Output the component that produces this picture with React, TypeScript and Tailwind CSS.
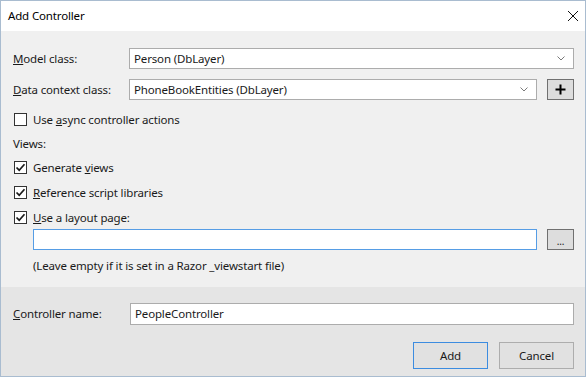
import React from "react";

function Check({ checked }: { checked?: boolean }) {
  return (
    <span className="flex h-[13px] w-[13px] shrink-0 items-center justify-center border border-[#333333] bg-white">
      {checked && (
        <svg width="11" height="11" viewBox="0 0 11 11">
          <path d="M1.5 5.5 L4.2 8.2 L9.5 2.2" fill="none" stroke="#1a1a1a" strokeWidth="1.7" />
        </svg>
      )}
    </span>
  );
}

function Chevron() {
  return (
    <svg width="8" height="5" viewBox="0 0 8 5" className="shrink-0">
      <path d="M0.5 0.5 L4 4 L7.5 0.5" fill="none" stroke="#7a7a7a" strokeWidth="1" />
    </svg>
  );
}

function Combo({ value, className }: { value: string; className?: string }) {
  return (
    <div
      className={
        "flex h-[21px] items-center justify-between border border-[#acacac] bg-white pl-[4px] pr-[8px] " +
        (className ?? "")
      }
    >
      <span>{value}</span>
      <Chevron />
    </div>
  );
}

function CheckRow({ checked, children }: { checked?: boolean; children: React.ReactNode }) {
  return (
    <div className="flex h-[13px] items-center gap-[6px] pl-[1px]">
      <Check checked={checked} />
      <span>{children}</span>
    </div>
  );
}

export default function App() {
  return (
    <div
      className="flex h-[377px] w-[586px] flex-col border border-[#a9bcd0] text-[11.5px] tracking-[-0.15px] text-[#1a1a1a]"
      style={{ fontFamily: '"Noto Sans", "Open Sans", sans-serif' }}
    >
      <div className="flex h-[30px] shrink-0 items-center justify-between bg-white pl-[7px] pr-[5px]">
        <span className="text-black">Add Controller</span>
        <svg width="12" height="12" viewBox="0 0 12 12" className="mr-[1px]">
          <path d="M1 1 L11 11 M11 1 L1 11" stroke="#111" strokeWidth="1" />
        </svg>
      </div>

      <div className="flex flex-1 flex-col bg-[#f0f0f0] pl-[12px] pr-[11px] pt-[17px]">
        <div className="flex items-center">
          <span className="w-[116px]">
            <u>M</u>odel class:
          </span>
          <Combo value="Person (DbLayer)" className="flex-1" />
        </div>

        <div className="mt-[10px] flex items-center">
          <span className="w-[116px]">
            <u>D</u>ata context class:
          </span>
          <Combo value="PhoneBookEntities (DbLayer)" className="flex-1" />
          <button className="ml-[10px] flex h-[21px] w-[27px] items-center justify-center border border-[#707070] bg-[#dddddd]">
            <svg width="11" height="11" viewBox="0 0 11 11">
              <path d="M5.5 0.5 V10.5 M0.5 5.5 H10.5" stroke="#000" strokeWidth="2" />
            </svg>
          </button>
        </div>

        <div className="mt-[13px]">
          <CheckRow>
            Use <u>a</u>sync controller actions
          </CheckRow>
        </div>

        <div className="mt-[11px] h-[14px] leading-[14px]">Views:</div>

        <div className="mt-[10px] flex flex-col gap-[12px]">
          <CheckRow checked>
            Generate <u>v</u>iews
          </CheckRow>
          <CheckRow checked>
            <u>R</u>eference script libraries
          </CheckRow>
          <CheckRow checked>
            <u>U</u>se a layout page:
          </CheckRow>
        </div>

        <div className="mt-[5px] flex items-center pl-[20px]">
          <div className="h-[21px] flex-1 border border-[#569de5] bg-white" />
          <button className="ml-[10px] flex h-[21px] w-[27px] items-end justify-center border border-[#707070] bg-[#dddddd] pb-[3px] text-[10px] leading-none">
            ...
          </button>
        </div>

        <div className="mt-[7px] pl-[20px]">(Leave empty if it is set in a Razor _viewstart file)</div>
      </div>

      <div className="flex h-[89px] shrink-0 flex-col bg-[#e5e5e5] pl-[12px] pr-[11px] pt-[16px]">
        <div className="flex items-center">
          <span className="w-[117px]">
            <u>C</u>ontroller name:
          </span>
          <div className="flex h-[22px] flex-1 items-center border border-[#acacac] bg-white pl-[4px]">
            PeopleController
          </div>
        </div>
        <div className="mt-[17px] flex justify-end gap-[11px]">
          <button className="h-[27px] w-[75px] border border-[#3c8ce0] bg-[#e1e1e1]">Add</button>
          <button className="h-[27px] w-[75px] border border-[#adadad] bg-[#e1e1e1]">Cancel</button>
        </div>
      </div>
    </div>
  );
}
